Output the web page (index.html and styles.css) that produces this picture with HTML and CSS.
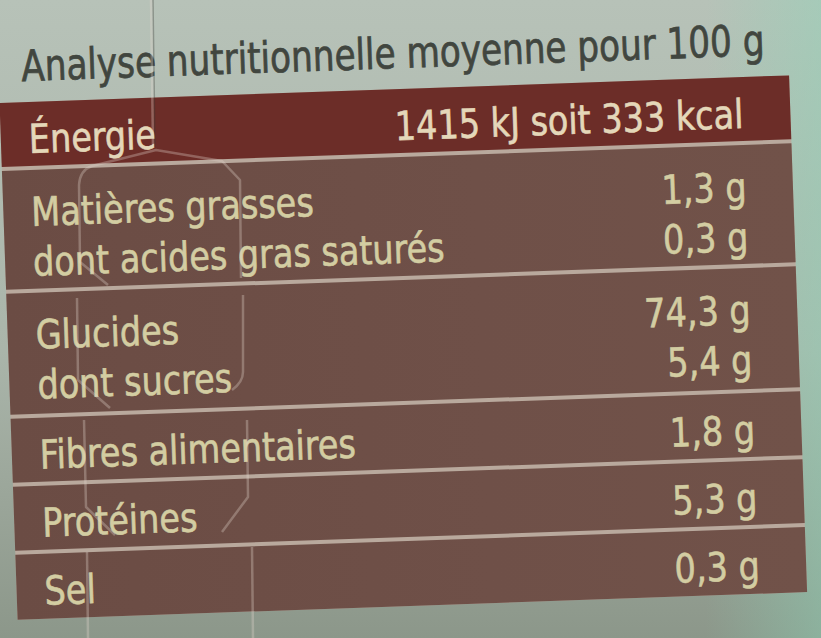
FILE: index.html
```html
<!DOCTYPE html>
<html lang="fr">
<head>
<meta charset="utf-8">
<title>Analyse nutritionnelle</title>
<link rel="stylesheet" href="styles.css">
</head>
<body>
<div class="page">
  <div class="label">
    <h1 class="title">Analyse nutritionnelle moyenne pour 100 g</h1>
    <div class="table">
      <div class="row energy">
        <span class="name">Énergie</span>
        <span class="val">1415 kJ soit 333 kcal</span>
      </div>
      <div class="row double">
        <div class="names"><span>Matières grasses</span><span>dont acides gras saturés</span></div>
        <div class="vals"><span>1,3 g</span><span>0,3 g</span></div>
      </div>
      <div class="row double tall">
        <div class="names"><span>Glucides</span><span>dont sucres</span></div>
        <div class="vals"><span>74,3 g</span><span>5,4 g</span></div>
      </div>
      <div class="row single">
        <span class="name">Fibres alimentaires</span>
        <span class="val">1,8 g</span>
      </div>
      <div class="row single">
        <span class="name">Protéines</span>
        <span class="val">5,3 g</span>
      </div>
      <div class="row single last">
        <span class="name">Sel</span>
        <span class="val">0,3 g</span>
      </div>
    </div>
  </div>
  <svg class="creases" width="821" height="638" viewBox="0 0 821 638" aria-hidden="true">
    <path class="shade" d="M153 0 L155 147"/>
    <path class="crease" d="M151 0 L153 147"/>
    <path class="crease" d="M108 285 L80 262 L79 185 Q80 170 92 166 L156 150 L222 161 L240 180 L241 278"/>
    <path class="crease" d="M110 408 L78 380 L77 298"/>
    <path class="crease" d="M243 295 L243 372 Q243 382 232 390"/>
    <path class="crease" d="M115 535 L86 507 L84 420"/>
    <path class="crease" d="M247 420 L248 497 L222 532"/>
    <path class="crease" d="M87 552 L88 638"/>
    <path class="crease" d="M252 547 L253 638"/>
  </svg>
</div>
</body>
</html>
```

FILE: styles.css
```css
html, body {
  margin: 0;
  padding: 0;
}

body {
  width: 821px;
  height: 638px;
  overflow: hidden;
  font-family: "DejaVu Sans Condensed", "DejaVu Sans", sans-serif;
}

.page {
  position: relative;
  box-sizing: border-box;
  width: 821px;
  height: 638px;
  padding-top: 30px;
  overflow: hidden;
  background:
    linear-gradient(90deg, rgba(255, 255, 255, 0) 86%, rgba(140, 215, 185, 0.4) 100%),
    linear-gradient(180deg, #b7c2b8 0%, #aab5aa 55%, #8c978a 100%);
}

.label {
  width: 790px;
  margin-left: -3px;
  padding-top: 15px;
  transform: rotate(-2deg);
  transform-origin: 0 0;
}

.title {
  margin: 0 0 14px 23px;
  font-size: 43px;
  line-height: 44px;
  font-weight: 400;
  color: #41463f;
  white-space: nowrap;
  transform: scaleX(0.885);
  transform-origin: left center;
  -webkit-text-stroke: 0.7px #41463f;
}

.table {
  display: flex;
  flex-direction: column;
  gap: 4px;
  background: #b9a99d;
}

.row {
  box-sizing: border-box;
  display: flex;
  justify-content: space-between;
  align-items: flex-start;
  padding: 17px 47px 0 28px;
  font-size: 40px;
  line-height: 50px;
  color: #d3cda2;
  -webkit-text-stroke: 0.6px #d3cda2;
  background: linear-gradient(90deg, #6b4c44 0%, #6f5048 60%, #715249 100%);
  white-space: nowrap;
}

.row > :first-child {
  transform: scaleX(0.93);
  transform-origin: left center;
}

.row > :last-child {
  transform: scaleX(0.93);
  transform-origin: right center;
}

.row.energy {
  height: 64px;
  padding-top: 12px;
  color: #e4d7b9;
  -webkit-text-stroke: 0.6px #e4d7b9;
  background: #6c2d28;
}

.row.double {
  height: 119px;
}

.row.double.tall {
  height: 121px;
}

.row.single {
  height: 64px;
  padding-top: 12px;
}

.row.last {
  height: 65px;
}

.names,
.vals {
  display: flex;
  flex-direction: column;
}

.vals {
  align-items: flex-end;
}

.creases {
  position: absolute;
  left: 0;
  top: 0;
  pointer-events: none;
}

.crease {
  fill: none;
  stroke: rgba(228, 214, 204, 0.32);
  stroke-width: 2.5;
  stroke-linejoin: round;
}

.shade {
  fill: none;
  stroke: rgba(60, 60, 55, 0.35);
  stroke-width: 1.5;
}
```
